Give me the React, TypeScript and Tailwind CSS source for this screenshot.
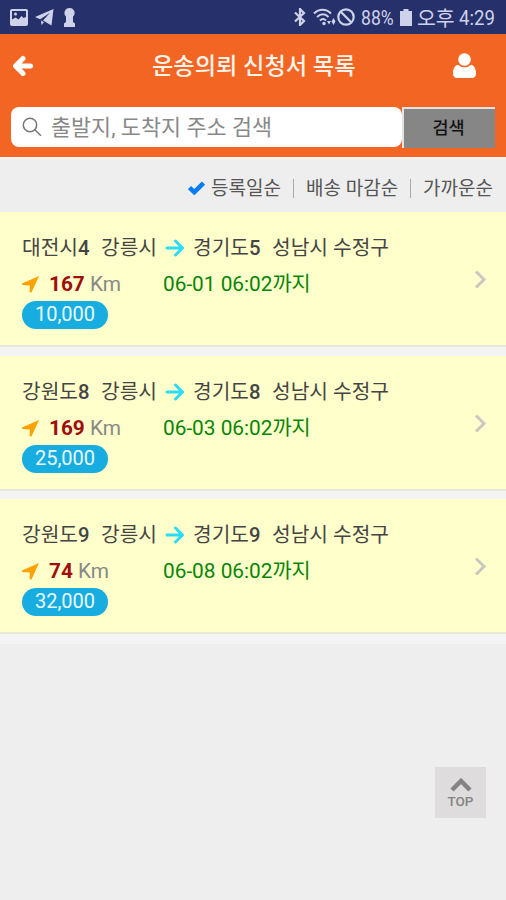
import React from 'react';

interface Order {
  from: string;
  fromNo: number;
  fromCity: string;
  to: string;
  toNo: number;
  toCity: string;
  distance: number;
  deadline: string;
  price: string;
}

const orders: Order[] = [
  { from: '대전시', fromNo: 4, fromCity: '강릉시', to: '경기도', toNo: 5, toCity: '성남시 수정구', distance: 167, deadline: '06-01 06:02', price: '10,000' },
  { from: '강원도', fromNo: 8, fromCity: '강릉시', to: '경기도', toNo: 8, toCity: '성남시 수정구', distance: 169, deadline: '06-03 06:02', price: '25,000' },
  { from: '강원도', fromNo: 9, fromCity: '강릉시', to: '경기도', toNo: 9, toCity: '성남시 수정구', distance: 74, deadline: '06-08 06:02', price: '32,000' },
];

function StatusBar() {
  return (
    <div className="flex h-[34px] items-center bg-[#26306b] pr-[11px] pl-[10px] text-[#ced3ea]">
      <svg width="18" height="17" viewBox="0 0 18 17" fill="none" stroke="currentColor" strokeWidth="2">
        <rect x="1" y="1" width="16" height="15" rx="1" />
        <path d="M2 15V10.500l3.500-2 3 2 3-3.500 2 2 2.500-1v7z" fill="currentColor" stroke="none" />
        <circle cx="5.500" cy="5" r="1.500" fill="currentColor" stroke="none" />
      </svg>
      <svg className="ml-[7px]" width="19" height="17" viewBox="0 0 19 17" fill="currentColor">
        <path d="M18.500 0L0 8l5.200 2.300L15 3.800 8 11.500l8.500 5z" />
        <path d="M6 11.500l3 1.800L6.500 16z" />
      </svg>
      <svg className="ml-[9px]" width="13" height="19" viewBox="0 0 13 19" fill="currentColor">
        <path d="M6.500 0a5 5 0 0 1 3.500 8.600V14l2 1.500V19H1v-3.500L3 14V8.600A5 5 0 0 1 6.500 0z" />
      </svg>

      <div className="ml-auto flex items-center">
        <svg width="12" height="18" viewBox="0 0 12 18" fill="none" stroke="currentColor" strokeWidth="2.200">
          <path d="M1 4.500l9 8.500-4 4V1l4 4-9 8.500" />
        </svg>
        <svg className="ml-[7px]" width="24" height="18" viewBox="0 0 24 18" fill="none" stroke="currentColor" strokeWidth="2">
          <path d="M1 5.500c5-5 12-5 17 0M4 9c4-3.500 8-3.500 11.500 0M7 12.500c2-2 4-2 6 0" />
          <circle cx="11" cy="15.500" r="1.700" fill="currentColor" stroke="none" />
          <path d="M14 13h4l-2 3.500zM18.500 13.500l2-3.500 2 3.500-2 3.500z" fill="currentColor" stroke="none" />
        </svg>
        <svg width="18" height="18" viewBox="0 0 18 18" fill="none" stroke="currentColor" strokeWidth="2.200">
          <circle cx="9" cy="9" r="7.700" />
          <path d="M3.500 3.500l11 11" />
        </svg>
        <span className="ml-[6px] w-[39px] text-[20px] leading-[34px] whitespace-nowrap">
          <span className="inline-block origin-left scale-x-[0.88] pt-[2px]">88%</span>
        </span>
        <svg width="12" height="17" viewBox="0 0 12 17" fill="currentColor">
          <path d="M3.500 0h5v2H12v15H0V2h3.500z" />
        </svg>
        <span className="ml-[5px] w-[42px] pt-[3px] text-[20.500px] leading-[34px] whitespace-nowrap">오후</span>
        <span className="w-[36px] text-[20px] leading-[34px] whitespace-nowrap">
          <span className="inline-block origin-left scale-x-[0.93] pt-[2px]">4:29</span>
        </span>
      </div>
    </div>
  );
}

function Header() {
  return (
    <header className="h-[123px] bg-[#f26522] px-[11px]">
      <div className="flex h-[73px] items-start pt-[14px] text-white">
        <svg className="mt-[7px] ml-[1px]" width="22" height="22" viewBox="0 0 22 22" fill="none" stroke="currentColor" strokeWidth="5" strokeLinejoin="round" strokeLinecap="round">
          <path d="M11 3.500L3.500 11l7.500 7.500M4 11h14.500" />
        </svg>
        <h1 className="mt-[1px] ml-[118px] w-[205px] text-[23.200px] font-medium leading-[34px] whitespace-nowrap text-[#fff3ea]">
          운송의뢰 신청서 목록
        </h1>
        <svg className="mt-[5px] ml-[96px]" width="23" height="25" viewBox="0 0 23 25" fill="currentColor">
          <circle cx="11.500" cy="6.500" r="6.300" />
          <path d="M5 11.800c3.500 3.400 9.500 3.400 13 0 3.500.7 5 4.200 5 8.700 0 2.800-1.500 4.500-4 4.500H4c-2.500 0-4-1.700-4-4.500 0-4.500 1.500-8 5-8.700z" />
        </svg>
      </div>
      <div className="flex">
        <div className="flex h-[40px] w-[391px] items-center rounded-[8px] bg-white pl-[11px]">
          <svg width="20" height="20" viewBox="0 0 20 20" fill="none" stroke="#777" strokeWidth="1.500">
            <circle cx="8" cy="8" r="6.700" />
            <path d="M12.800 12.800l6.200 6" />
          </svg>
          <span className="mt-[2px] ml-[9px] text-[21.800px] leading-[40px] whitespace-nowrap text-[#888]">출발지, 도착지 주소 검색</span>
        </div>
        <button className="h-[41px] w-[93px] border-t-2 border-l-2 border-t-[#e5e2e0] border-l-[#e5e2e0] bg-[#868686] pr-[2px] text-[17.500px] font-medium leading-none text-[#111]">
          검색
        </button>
      </div>
    </header>
  );
}

function SortBar() {
  return (
    <div className="flex h-[55px] items-center border-t-2 border-[#f6f3f2] bg-[#eee] pt-[5px] pl-[188px] text-[19px] leading-[28px] whitespace-nowrap text-[#555]">
      <svg width="17" height="14" viewBox="0 0 17 14" fill="none" stroke="#087bf5" strokeWidth="4.500">
        <path d="M1.500 6.500l4.800 4.700L15.500 2" />
      </svg>
      <span className="mt-[1px] ml-[6px] w-[82px]">등록일순</span>
      <span className="h-[19px] w-px bg-[#aaa]" />
      <span className="mt-[1px] ml-[12px] w-[104px]">배송 마감순</span>
      <span className="h-[19px] w-px bg-[#aaa]" />
      <span className="mt-[1px] ml-[12px]">가까운순</span>
    </div>
  );
}

function OrderCard({ order }: { order: Order }) {
  return (
    <div className="flex h-[135px] items-start border-b-2 border-[#e6e8d8] bg-[#ffffcb] pl-[22px]">
      <div className="w-[452px] pt-[21px] whitespace-nowrap">
        <div className="flex h-[30px] items-center text-[20.300px] leading-[30px] text-[#444]">
          <span className="w-[79px]">
            {order.from}
            <span className="font-medium">{order.fromNo}</span>
          </span>
          <span className="w-[64px]">{order.fromCity}</span>
          <svg width="20" height="18" viewBox="0 0 20 18" fill="none" stroke="#29dcf8" strokeWidth="3" strokeLinecap="round" strokeLinejoin="round">
            <path d="M2 9h15M10.500 2l7 7-7 7" />
          </svg>
          <span className="ml-[8px] w-[79px]">
            {order.to}
            <span className="font-medium">{order.toNo}</span>
          </span>
          <span>{order.toCity}</span>
        </div>
        <div className="mt-[6px] flex h-[30px] items-center text-[20.800px] leading-[30px]">
          <svg className="mt-[1px]" width="17" height="17" viewBox="0 0 17 17" fill="#ffa200">
            <path d="M17 0L9.500 16.500 7.500 16 8 9.500 0 9V7.500z" />
          </svg>
          <span className="ml-[10px] w-[114px] text-[#888]">
            <b className="text-[#a00d0d]">{order.distance}</b> Km
          </span>
          <span className="text-[#078507]">{order.deadline}까지</span>
        </div>
        <div className="mt-[2px] h-[28px] w-[86px] rounded-full bg-[#18ade0] text-center text-[20px] leading-[27px] text-[#e8faff]">
          {order.price}
        </div>
      </div>
      <svg className="mt-[58px]" width="13" height="19" viewBox="0 0 13 19" fill="none" stroke="#c8c8c0" strokeWidth="3">
        <path d="M2 1.500l8 8-8 8" />
      </svg>
    </div>
  );
}

export default function App() {
  return (
    <div className="h-[900px] w-[506px] overflow-hidden bg-[#eee] font-[Roboto,'Noto_Sans_CJK_KR',sans-serif]">
      <StatusBar />
      <Header />
      <SortBar />
      <div className="flex h-[432px] flex-col gap-[8.500px] bg-[#f4f4f4]">
        {orders.map((order) => (
          <OrderCard key={order.deadline} order={order} />
        ))}
      </div>
      <button className="mt-[123px] ml-[435px] flex h-[51px] w-[51px] flex-col items-center bg-[#dedcdc] pt-[11px] text-[#858383]">
        <svg width="22" height="14" viewBox="0 0 22 14" fill="none" stroke="currentColor" strokeWidth="4.500">
          <path d="M2 12l9-9 9 9" />
        </svg>
        <span className="mt-[2px] text-[13.500px] font-medium leading-[14px]">TOP</span>
      </button>
    </div>
  );
}
